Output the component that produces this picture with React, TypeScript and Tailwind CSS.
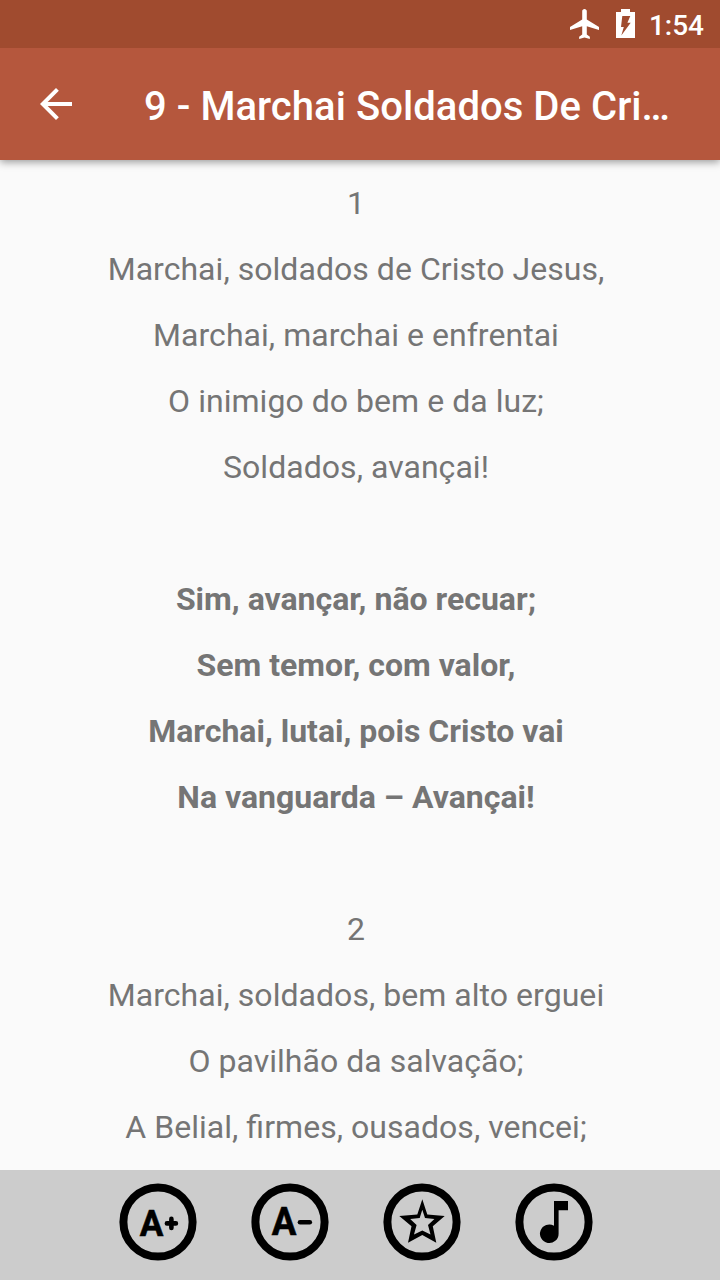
import type { ReactNode } from 'react';

type Verse = { text: string; bold?: boolean };

const LYRICS: Verse[] = [
  { text: '1' },
  { text: 'Marchai, soldados de Cristo Jesus,' },
  { text: 'Marchai, marchai e enfrentai' },
  { text: 'O inimigo do bem e da luz;' },
  { text: 'Soldados, avançai!' },
  { text: '' },
  { text: 'Sim, avançar, não recuar;', bold: true },
  { text: 'Sem temor, com valor,', bold: true },
  { text: 'Marchai, lutai, pois Cristo vai', bold: true },
  { text: 'Na vanguarda – Avançai!', bold: true },
  { text: '' },
  { text: '2' },
  { text: 'Marchai, soldados, bem alto erguei' },
  { text: 'O pavilhão da salvação;' },
  { text: 'A Belial, firmes, ousados, vencei;' },
];

// Round toolbar button, drawing origin is the circle center
function RoundButton({ label, children }: { label: string; children: ReactNode }) {
  return (
    <button aria-label={label} className="h-[78px] w-[78px] shrink-0">
      <svg viewBox="-39 -39 78 78" className="block h-full w-full">
        <circle r="34.6" fill="none" stroke="#000" strokeWidth="8" />
        {children}
      </svg>
    </button>
  );
}

function StatusBar() {
  return (
    <div className="relative z-20 flex h-12 shrink-0 items-center justify-end bg-[#a04b2f] pr-4 text-white">
      <svg viewBox="2 2 19 20" preserveAspectRatio="none" className="h-[30px] w-[29px]" fill="currentColor">
        <path d="M21 16v-2l-8-5V3.5c0-.83-.67-1.5-1.5-1.5S10 2.67 10 3.5V9l-8 5v2l8-2.5V19l-2 1.5V22l3.5-1 3.5 1v-1.5L13 19v-5.5z" />
      </svg>
      <svg viewBox="0 0 19 29" className="mb-px ml-[17px] h-[29px] w-[19px]" fill="currentColor">
        <path fillRule="evenodd" d="M5 0h9v3h5v26H0V3h5zM6.3 7L5 18h2.8L5.3 26.5L14.7 13.7H11.4L14.3 7z" />
      </svg>
      <span className="ml-[14px] pt-1 text-[28px] leading-none font-medium">1:54</span>
    </div>
  );
}

export default function App() {
  return (
    <div className="flex h-[1280px] w-[720px] flex-col overflow-hidden bg-[#fafafa] font-['Roboto',sans-serif]">
      <StatusBar />

      {/* HEADER */}
      <header className="relative z-10 flex h-28 shrink-0 items-center bg-[#b5573d] pl-10 text-white shadow-[0_2px_8px_rgba(0,0,0,0.4)]">
        <svg viewBox="4 4 16 16" className="h-8 w-8 shrink-0" fill="currentColor">
          <path d="M20 11H7.83l5.59-5.59L12 4l-8 8 8 8 1.41-1.41L7.83 13H20z" />
        </svg>
        <h1 className="ml-[72px] pt-1.5 text-[40px] leading-[48px] font-medium tracking-[0.05px] whitespace-nowrap">
          9 - Marchai Soldados De Cri…
        </h1>
      </header>

      {/* LYRICS */}
      <main className="min-h-0 flex-1 overflow-hidden pt-[10px] pr-2 text-center text-[32px] leading-[66px] text-[#757575]">
        {LYRICS.map((line, i) => (
          <p
            key={i}
            className={line.bold ? 'h-[66px] font-bold' : "h-[66px] tracking-[0.04px] [font-feature-settings:'liga']"}
          >
            {line.text}
          </p>
        ))}
      </main>

      {/* TOOLBAR */}
      <footer className="flex h-[110px] shrink-0 gap-[54px] bg-[#ccc] pt-[13px] pl-[119px]">
        <RoundButton label="Aumentar letra">
          <text x="-18.3" y="14.3" fontSize="37" fontWeight="700" textLength="23.6" lengthAdjust="spacingAndGlyphs" stroke="#000" strokeWidth=".6">A</text>
          <path d="M8.9 1.4h9M13.4 -3.1v9" stroke="#000" strokeWidth="4.6" strokeLinecap="round" />
        </RoundButton>
        <RoundButton label="Diminuir letra">
          <text x="-18.3" y="12.9" fontSize="38" fontWeight="700" textLength="24.6" lengthAdjust="spacingAndGlyphs" stroke="#000" strokeWidth=".6">A</text>
          <path d="M10 .2h9.8" stroke="#000" strokeWidth="4.6" strokeLinecap="round" />
        </RoundButton>
        <RoundButton label="Favorito">
          <path
            fillRule="evenodd"
            d="M.3 -22.7L5.3 -7.4L22.7 -6L10.8 4.3L14.3 20.7L.3 13L-14 20.7L-10.5 4.3L-22.7 -6L-4.7 -7.4zM.3 -12.3L-2.3 -3.9L-11.8 -3L-5.4 3L-8 12.4L.3 8.5L8.5 12.4L6 3L12.4 -3L3 -3.9z"
          />
        </RoundButton>
        <RoundButton label="Tocar música">
          <path d="M0 -21H14V-11.7H4.6V11.7A9.3 9.3 0 1 1 0 3.7z" />
        </RoundButton>
      </footer>
    </div>
  );
}
